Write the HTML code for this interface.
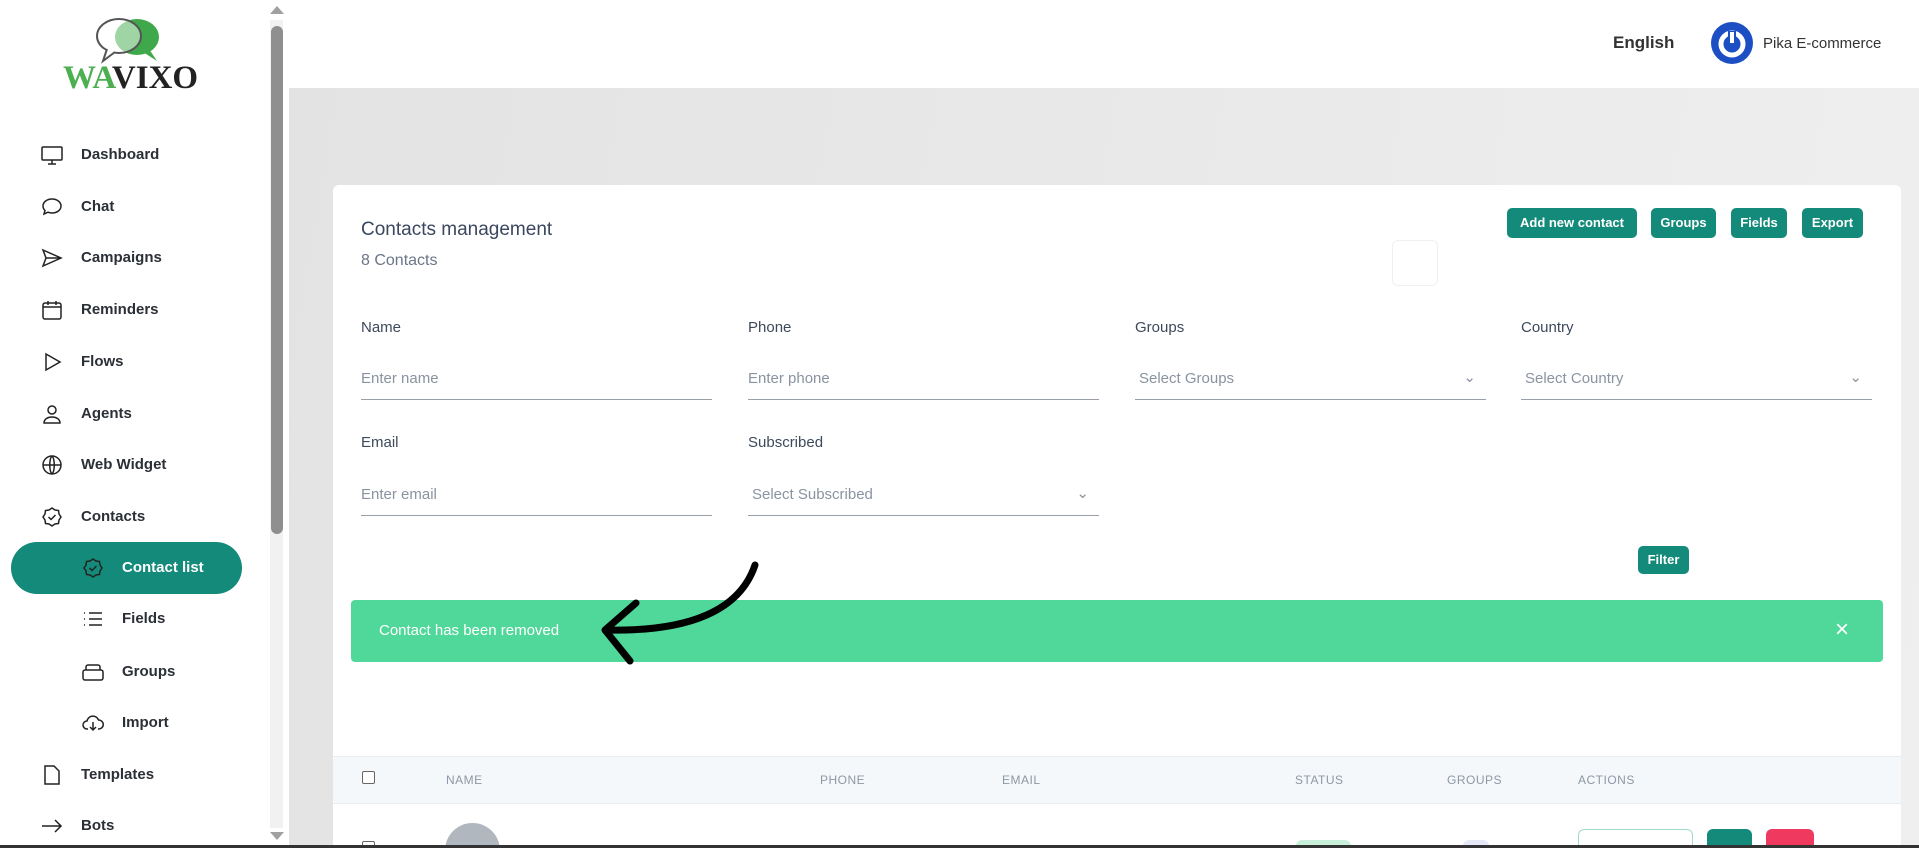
<!DOCTYPE html>
<html style="width:1919px;height:848px;overflow:hidden"><head><meta charset="utf-8"><style>
*{box-sizing:border-box;margin:0;padding:0}
body{width:1919px;height:848px;overflow:hidden;background:#e6e6e6;font-family:"Liberation Sans",sans-serif;position:relative}
.abs{position:absolute}
#side{left:0;top:0;width:289px;height:848px;background:#fff}
.nav{position:absolute;left:0;font-weight:bold;font-size:15px;color:#2b2f36}
.nav svg{position:absolute;left:-41px;top:-3px}
#hdr{left:289px;top:0;width:1630px;height:88px;background:#fff}
#card{left:333px;top:185px;width:1568px;height:663px;background:#fff;border-radius:6px 6px 0 0}
.btn{position:absolute;background:#148a7a;color:#fff;font-weight:bold;font-size:13px;border-radius:5px;text-align:center;line-height:30px;height:30px}
.lbl{position:absolute;font-size:15px;color:#3d4a5c}
.inp{position:absolute;width:351px;border-bottom:1.5px solid #9aa0a8;height:30px;font-size:15px;color:#8a93a0}
.th{position:absolute;top:773px;font-size:12px;color:#8d97a6;letter-spacing:.5px}
</style></head><body>
<div id="hdr" class="abs"></div>
<div class="abs" style="left:289px;top:88px;width:1630px;height:760px;background:linear-gradient(100deg,#e3e3e3,#efefef)"></div>
<div id="side" class="abs">
<svg class="abs" style="left:93px;top:17px" width="72" height="48" viewBox="0 0 72 48"><ellipse cx="44" cy="20" rx="22" ry="18" fill="#3ea84a"/><path d="M56 32 L64 44 L50 35Z" fill="#3ea84a"/><ellipse cx="26" cy="19" rx="22" ry="17" fill="#fff" fill-opacity=".5" stroke="#555" stroke-width="2"/><path d="M14 32 L10 44 L22 35" fill="#fff" stroke="#555" stroke-width="2"/></svg>
<div class="abs" style="left:63px;top:60px;font-family:'Liberation Serif',serif;font-weight:bold;font-size:33px"><span style="color:#4caf50">WA</span><span style="color:#222">VIXO</span></div>
<div class="abs" style="left:11px;top:542px;width:231px;height:52px;border-radius:26px;background:#148a7a"></div>
<div class="nav" style="left:81px;top:146px"><svg width="24" height="24" viewBox="0 0 24 24" fill="none" stroke="#222" stroke-width="1.5"><rect x="2" y="4" width="20" height="13" rx="1"/><path d="M8 21h8M12 17v4"/></svg>Dashboard</div>
<div class="nav" style="left:81px;top:198px"><svg width="24" height="24" viewBox="0 0 24 24" fill="none" stroke="#222" stroke-width="1.5"><path d="M12 4c5 0 9 3 9 7s-4 7-9 7c-1.5 0-3-.3-4-.8L4 19l1-3.5C3.7 14.3 3 12.7 3 11c0-4 4-7 9-7z"/></svg>Chat</div>
<div class="nav" style="left:81px;top:249px"><svg width="24" height="24" viewBox="0 0 24 24" fill="none" stroke="#222" stroke-width="1.5"><path d="M3 4l18 8-18 8 3-8zM6 12h15"/></svg>Campaigns</div>
<div class="nav" style="left:81px;top:301px"><svg width="24" height="24" viewBox="0 0 24 24" fill="none" stroke="#222" stroke-width="1.5"><rect x="3" y="5" width="18" height="16" rx="2"/><path d="M3 9h18M8 3v4M16 3v4"/></svg>Reminders</div>
<div class="nav" style="left:81px;top:353px"><svg width="24" height="24" viewBox="0 0 24 24" fill="none" stroke="#222" stroke-width="1.5"><path d="M6 4l14 8-14 8z"/></svg>Flows</div>
<div class="nav" style="left:81px;top:405px"><svg width="24" height="24" viewBox="0 0 24 24" fill="none" stroke="#222" stroke-width="1.5"><circle cx="12" cy="8" r="4"/><path d="M4 21c0-4 4-6 8-6s8 2 8 6z"/></svg>Agents</div>
<div class="nav" style="left:81px;top:456px"><svg width="24" height="24" viewBox="0 0 24 24" fill="none" stroke="#222" stroke-width="1.5"><circle cx="12" cy="12" r="9"/><path d="M3 12h18M12 3c3 3 3 15 0 18M12 3c-3 3-3 15 0 18"/></svg>Web Widget</div>
<div class="nav" style="left:81px;top:508px"><svg width="24" height="24" viewBox="0 0 24 24" fill="none" stroke="#222" stroke-width="1.5"><path d="M12 3l3 2 3.5.5.5 3.5 2 3-2 3-.5 3.5-3.5.5-3 2-3-2-3.5-.5L5 15l-2-3 2-3 .5-3.5L9 5z"/><path d="M8.5 12l2.5 2.5 4.5-4.5"/></svg>Contacts</div>
<div class="nav" style="left:122px;top:559px;color:#fff"><svg width="24" height="24" viewBox="0 0 24 24" fill="none" stroke="#222" stroke-width="1.5"><path d="M12 3l3 2 3.5.5.5 3.5 2 3-2 3-.5 3.5-3.5.5-3 2-3-2-3.5-.5L5 15l-2-3 2-3 .5-3.5L9 5z"/><path d="M8.5 12l2.5 2.5 4.5-4.5"/></svg>Contact list</div>
<div class="nav" style="left:122px;top:610px"><svg width="24" height="24" viewBox="0 0 24 24" fill="none" stroke="#222" stroke-width="1.5"><path d="M8 6h13M8 12h13M8 18h13M3 6h1M3 12h1M3 18h1"/></svg>Fields</div>
<div class="nav" style="left:122px;top:663px"><svg width="24" height="24" viewBox="0 0 24 24" fill="none" stroke="#222" stroke-width="1.5"><rect x="2" y="10" width="20" height="10" rx="2"/><path d="M5 10V7a2 2 0 012-2h10a2 2 0 012 2v3"/></svg>Groups</div>
<div class="nav" style="left:122px;top:714px"><svg width="24" height="24" viewBox="0 0 24 24" fill="none" stroke="#222" stroke-width="1.5"><path d="M7 18H6a4 4 0 010-8 6 6 0 0111.5-1A4.5 4.5 0 0118 18h-1"/><path d="M12 11v8M9 16l3 3 3-3"/></svg>Import</div>
<div class="nav" style="left:81px;top:766px"><svg width="24" height="24" viewBox="0 0 24 24" fill="none" stroke="#222" stroke-width="1.5"><path d="M5 3h9l5 5v13H5z"/></svg>Templates</div>
<div class="nav" style="left:81px;top:817px"><svg width="24" height="24" viewBox="0 0 24 24" fill="none" stroke="#222" stroke-width="1.5"><path d="M2 12h19M15 6l6 6-6 6"/></svg>Bots</div>
<div class="abs" style="left:270px;top:20px;width:13px;height:808px;background:#f1f1f1"></div>
<div class="abs" style="left:271px;top:26px;width:12px;height:508px;border-radius:6px;background:#8f8f8f"></div>
<div class="abs" style="left:270px;top:6px;width:0;height:0;border-left:7px solid transparent;border-right:7px solid transparent;border-bottom:8px solid #a0a0a0"></div>
<div class="abs" style="left:270px;top:832px;width:0;height:0;border-left:7px solid transparent;border-right:7px solid transparent;border-top:8px solid #a0a0a0"></div>
</div>
<div class="abs" style="left:1613px;top:33px;font-weight:bold;font-size:17px;color:#333">English</div>
<svg class="abs" style="left:1711px;top:22px" width="42" height="42" viewBox="0 0 42 42"><circle cx="21" cy="21" r="21" fill="#1d4fc4"/><circle cx="21" cy="22" r="11" fill="none" stroke="#fff" stroke-width="5"/><path d="M21 9v13" stroke="#1d4fc4" stroke-width="8"/><path d="M21 10v11" stroke="#fff" stroke-width="4"/></svg>
<div class="abs" style="left:1763px;top:35px;font-size:15px;color:#333">Pika E-commerce</div>
<div id="card" class="abs"></div>
<div class="abs" style="left:361px;top:219px;font-size:19px;color:#3b4760">Contacts management</div>
<div class="abs" style="left:361px;top:252px;font-size:16px;color:#6b7688">8 Contacts</div>
<div class="abs" style="left:1392px;top:240px;width:46px;height:46px;border:1px solid #f0f0f0;border-radius:6px"></div>
<div class="btn" style="left:1507px;top:208px;width:130px">Add new contact</div>
<div class="btn" style="left:1651px;top:208px;width:65px">Groups</div>
<div class="btn" style="left:1731px;top:208px;width:56px">Fields</div>
<div class="btn" style="left:1802px;top:208px;width:61px">Export</div>
<div class="lbl" style="left:361px;top:319px">Name</div>
<div class="lbl" style="left:748px;top:319px">Phone</div>
<div class="lbl" style="left:1135px;top:319px">Groups</div>
<div class="lbl" style="left:1521px;top:319px">Country</div>
<div class="inp" style="left:361px;top:370px">Enter name</div>
<div class="inp" style="left:748px;top:370px">Enter phone</div>
<div class="inp" style="left:1135px;top:370px;padding-left:4px">Select Groups<span style="position:absolute;right:10px;top:-2px">&#8964;</span></div>
<div class="inp" style="left:1521px;top:370px;padding-left:4px">Select Country<span style="position:absolute;right:10px;top:-2px">&#8964;</span></div>
<div class="lbl" style="left:361px;top:434px">Email</div>
<div class="lbl" style="left:748px;top:434px">Subscribed</div>
<div class="inp" style="left:361px;top:486px">Enter email</div>
<div class="inp" style="left:748px;top:486px;padding-left:4px">Select Subscribed<span style="position:absolute;right:10px;top:-2px">&#8964;</span></div>
<div class="btn" style="left:1638px;top:546px;width:51px;height:28px;line-height:28px">Filter</div>
<div class="abs" style="left:351px;top:600px;width:1532px;height:62px;background:#50d89a;border-radius:4px"></div>
<div class="abs" style="left:379px;top:622px;font-size:15px;color:#fff">Contact has been removed</div>
<div class="abs" style="left:1835px;top:616px;font-size:24px;color:#fff">×</div>
<svg class="abs" style="left:0;top:0" width="1919" height="848"><path d="M755 565 C740 610 690 632 606 630" fill="none" stroke="#000" stroke-width="7" stroke-linecap="round"/><path d="M636 603 L605 630 L630 661" fill="none" stroke="#000" stroke-width="7" stroke-linecap="round" stroke-linejoin="round"/></svg>
<div class="abs" style="left:333px;top:756px;width:1568px;height:48px;background:#f5f8fb;border-top:1px solid #e8edf2;border-bottom:1px solid #e8edf2"></div>
<div class="abs" style="left:362px;top:771px;width:13px;height:13px;border:1.5px solid #666;border-radius:2px;background:#fff"></div>
<div class="th" style="left:446px">NAME</div>
<div class="th" style="left:820px">PHONE</div>
<div class="th" style="left:1002px">EMAIL</div>
<div class="th" style="left:1295px">STATUS</div>
<div class="th" style="left:1447px">GROUPS</div>
<div class="th" style="left:1578px">ACTIONS</div>
<div class="abs" style="left:362px;top:841px;width:13px;height:13px;border:1.5px solid #666;border-radius:2px"></div>
<div class="abs" style="left:445px;top:823px;width:55px;height:55px;border-radius:50%;background:#b0b7bf"></div>
<div class="abs" style="left:1296px;top:840px;width:55px;height:20px;border-radius:6px;background:#c9f0db"></div>
<div class="abs" style="left:1463px;top:840px;width:26px;height:20px;border-radius:6px;background:#e4e8f8"></div>
<div class="abs" style="left:1578px;top:829px;width:115px;height:30px;border:1.5px solid #9fdcc4;border-radius:6px"></div>
<div class="abs" style="left:1707px;top:829px;width:45px;height:30px;border-radius:6px;background:#148a7a"></div>
<div class="abs" style="left:1766px;top:829px;width:48px;height:30px;border-radius:6px;background:#f0395f"></div>
<div class="abs" style="left:0;top:845px;width:1919px;height:3px;background:#333"></div>
</body></html>
